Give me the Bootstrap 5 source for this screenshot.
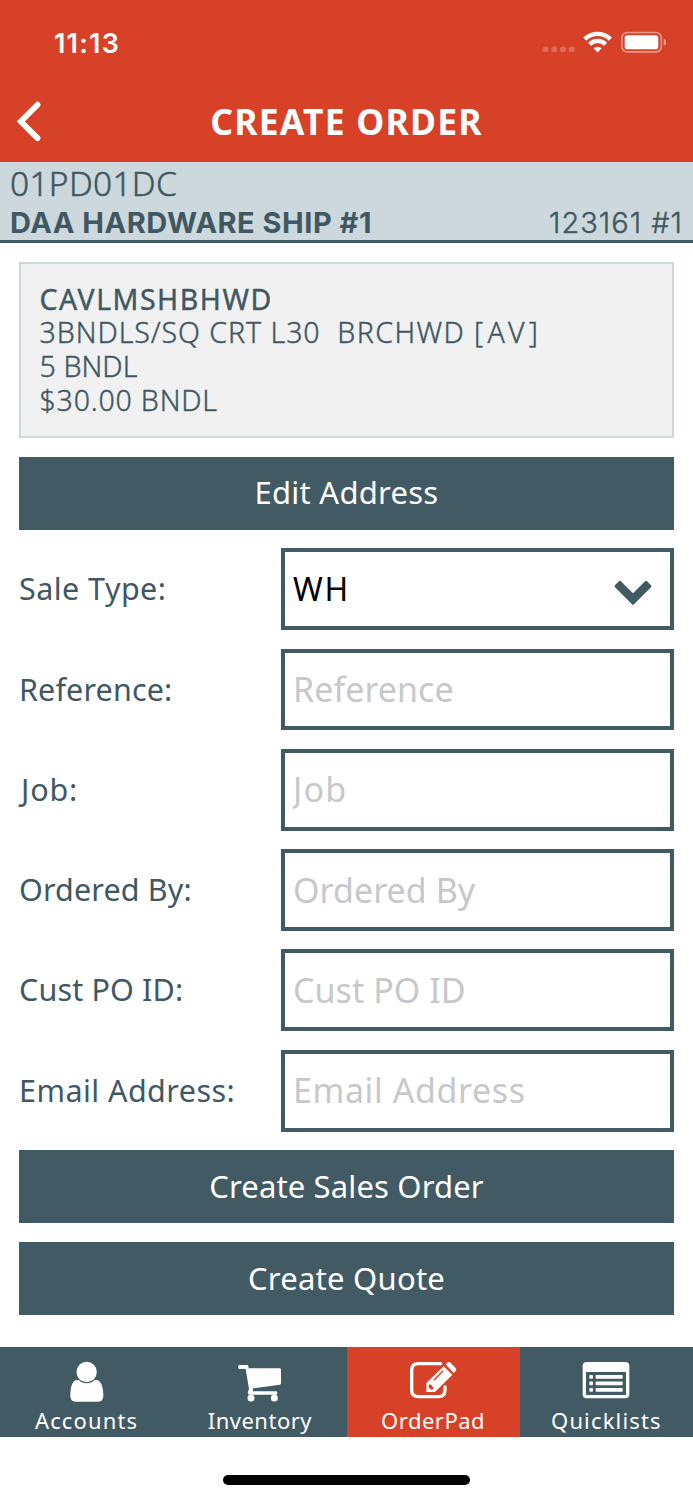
<!DOCTYPE html>
<html lang="en">
<head>
<meta charset="utf-8">
<meta name="viewport" content="width=device-width, initial-scale=1">
<title>Create Order</title>
<link rel="stylesheet" href="https://cdn.jsdelivr.net/npm/bootstrap@5.3.0/dist/css/bootstrap.min.css">
<style>
:root { --brand: #d74127; --slate: #425a64; --ink: #3f5863; --mist: #cdd8dc; }
body { font-family: "Noto Sans", sans-serif; color: var(--ink); background: #fff; }
.screen { height: 1500px; overflow: hidden; }
.brand-bg { background: var(--brand); }
.status-bar { height: 81px; padding: 3px 27px 0 54px; }
.clock { font: 600 27px/36px Inter, sans-serif; letter-spacing: 1.2px; padding-top: 3px; }
.title-bar { height: 81px; }
.title-bar h1 { font-size: 35.5px; font-weight: 700; letter-spacing: 1.19px; line-height: 80px; }
.back-link { width: 28px; height: 79px; left: 16px; }
.account-bar { background: var(--mist); border-bottom: 3px solid var(--slate); height: 81px; padding: 0 10px 0 10px; }
.account-id { font-size: 33.5px; font-weight: 300; line-height: 42px; letter-spacing: .3px; -webkit-text-stroke: .5px; }
.account-line { font: 700 29px/37px Inter, sans-serif; letter-spacing: .5px; }
.account-line .num { font-weight: 300; letter-spacing: 1px; -webkit-text-stroke: .4px; }
.content { padding: 19px 19px 0; gap: 18.5px; height: 1104px; }
.item-box { height: 176px; flex: none; background: #f1f1f1; border: 2px solid var(--mist); padding: 18.5px 18.5px; font-size: 28.5px; line-height: 33.8px; font-weight: 300; white-space: pre; -webkit-text-stroke: .4px; }
.item-code { font-weight: 400; letter-spacing: 1.5px; }
.item-desc { letter-spacing: .95px; }
.item-desc .finish { letter-spacing: 1.4px; }
.item-desc .tag { letter-spacing: 4.3px; }
.item-qty { letter-spacing: .1px; }
.item-price { letter-spacing: .8px; }
.btn-slate { height: 73.3px; flex: none; background: var(--slate); color: #fff; border: 0; border-radius: 0; font-size: 31px; line-height: 71px; padding: 0 0 1px; letter-spacing: .25px; }
.btn-slate.tight { letter-spacing: .15px; }
.field-row { height: 81.8px; flex: none; }
.field-row label { width: 262px; font-size: 30.5px; letter-spacing: .15px; line-height: 80.5px; }
.field-box { border: 4px solid var(--slate); border-radius: 0; height: 100%; padding: 0 8px 1px; font-size: 34px; letter-spacing: .05px; background: #fff; }
.field-box::placeholder { color: #c7c7cc; opacity: 1; }
.pick-box { font-size: 32px; color: #000; line-height: 71px; padding-right: 18px; letter-spacing: 1.8px; }
.field-row.airy label { letter-spacing: .45px; }
.field-row.airy input { letter-spacing: .6px; }
.field-row.wide label { letter-spacing: .8px; padding-left: 2px; }
.field-row.wide input { letter-spacing: 1.2px; }
.tabs-bar { height: 90px; background: var(--slate); }
.tab-item { padding-top: 13px; color: #fff; text-decoration: none; font-size: 22px; letter-spacing: 1.15px; line-height: 32px; }
.tab-item.tight { letter-spacing: .5px; }
.tab-item svg { width: 50px; height: 44px; display: block; }
.home-pill { width: 247.5px; height: 10px; border-radius: 5px; background: #000; margin: 38px auto 0; }
</style>
</head>
<body>
<div class="screen d-flex flex-column">
  <header class="brand-bg text-white flex-shrink-0">
    <div class="status-bar d-flex justify-content-between align-items-center">
      <span class="clock">11:13</span>
      <svg width="124" height="24" viewBox="0 0 124 24" fill="#fff" style="margin-top:2px">
        <g opacity=".22"><rect x=".8" y="15.500" width="5.6" height="5.6" rx="1.7"/><rect x="9.5" y="15.500" width="5.6" height="5.6" rx="1.7"/><rect x="18.2" y="15.500" width="5.6" height="5.6" rx="1.7"/><rect x="26.9" y="15.500" width="5.6" height="5.6" rx="1.7"/></g>
        <g fill="none" stroke="#fff" stroke-width="4.300"><path d="M42.8 8.100a18.300 18.300 0 0 1 25.600 0"/><path d="M47.6 13.200a11.400 11.400 0 0 1 16 0"/></g>
        <path d="M55.6 21.400l-4-4.100a5.800 5.800 0 0 1 8 0z"/>
        <rect x="79.900" y="1.500" width="39.400" height="19.400" rx="5.400" fill="none" stroke="#fff" stroke-opacity=".45" stroke-width="1.600"/>
        <rect x="82.700" y="4.200" width="33.600" height="14" rx="2.800"/><path opacity=".5" d="M121.700 7.700v7q2.400-1.100 2.400-3.500t-2.400-3.500z"/>
      </svg>
    </div>
    <div class="title-bar position-relative">
      <h1 class="text-center m-0">CREATE ORDER</h1>
      <a href="#" class="back-link position-absolute top-0 d-flex align-items-center" aria-label="Back">
        <svg width="28" height="42" viewBox="0 0 28 42"><path d="M21.500 4.700L4.800 21.500l16.700 16.600" fill="none" stroke="#fff" stroke-width="5.800" stroke-linecap="round"/></svg>
      </a>
    </div>
  </header>

  <section class="account-bar flex-shrink-0">
    <div class="account-id">01PD01DC</div>
    <div class="account-line d-flex justify-content-between"><span>DAA HARDWARE SHIP #1</span><span class="num">123161 #1</span></div>
  </section>

  <main class="content d-flex flex-column flex-shrink-0">
    <div class="item-box"><div class="item-code">CAVLMSHBHWD</div><div class="item-desc">3BNDLS/SQ CRT L30  <span class="finish">BRCHWD </span><span class="tag">[AV]</span></div><div class="item-qty">5 BNDL</div><div class="item-price">$30.00 BNDL</div></div>
    <button class="btn btn-slate w-100">Edit Address</button>
    <div class="field-row airy d-flex">
      <label class="flex-shrink-0">Sale Type:</label>
      <div class="field-box pick-box flex-grow-1 d-flex justify-content-between align-items-center"><span>WH</span>
        <svg width="38" height="26" viewBox="0 0 38 26" fill="#425a64" style="margin-top:9px"><path d="M1 5.200L4.900 1.300q1-1 2 0L19 13.200 31.100 1.300q1-1 2 0L37 5.200q1 1 0 2L20 24.200q-1 1-2 0L1 7.200q-1-1 0-2z"/></svg>
      </div>
    </div>
    <div class="field-row d-flex"><label for="ref" class="flex-shrink-0">Reference:</label><input id="ref" class="form-control field-box" placeholder="Reference"></div>
    <div class="field-row wide d-flex"><label for="job" class="flex-shrink-0">Job:</label><input id="job" class="form-control field-box" placeholder="Job"></div>
    <div class="field-row d-flex"><label for="by" class="flex-shrink-0">Ordered By:</label><input id="by" class="form-control field-box" placeholder="Ordered By"></div>
    <div class="field-row d-flex"><label for="po" class="flex-shrink-0">Cust PO ID:</label><input id="po" class="form-control field-box" placeholder="Cust PO ID"></div>
    <div class="field-row airy d-flex"><label for="mail" class="flex-shrink-0">Email Address:</label><input id="mail" class="form-control field-box" placeholder="Email Address"></div>
    <button class="btn btn-slate tight w-100">Create Sales Order</button>
    <button class="btn btn-slate w-100">Create Quote</button>
  </main>

  <nav class="tabs-bar row g-0 flex-shrink-0">
    <a href="#" class="tab-item col-3 d-flex flex-column align-items-center">
      <svg viewBox="185 60 150 132" fill="#fff"><path d="M229 120h60c14 3 20 22 20 48q0 17-16 17h-67q-16 0-16-17c0-26 5-45 19-48z"/><circle cx="259" cy="96" r="34" fill="#425a64"/><circle cx="259" cy="96" r="30.500"/></svg>
      <span>Accounts</span>
    </a>
    <a href="#" class="tab-item tight col-3 d-flex flex-column align-items-center">
      <svg viewBox="705 60 150 132" fill="#fff"><path d="M718 75h22q4 0 5 4l1 6h93q4 0 4 4v41q0 4-4 4l-80 11v9h70q3 0 3 5t-3 5h-81q-6-1-4-9l3-8-10-60h-19q-4-1-4-6t4-6z"/><circle cx="753" cy="174" r="10.500"/><circle cx="823" cy="174" r="10.500"/></svg>
      <span>Inventory</span>
    </a>
    <a href="#" class="tab-item tight brand-bg col-3 d-flex flex-column align-items-center">
      <svg viewBox="195 60 150 132" fill="#fff"><path d="M293 71h-67q-20 0-20 20v59q0 20 20 20h60q20 0 20-20v-9" fill="none" stroke="#fff" stroke-width="10" stroke-linecap="round"/><path fill-rule="evenodd" d="M302 79l26 25-52 52h-26v-27zM299 91l-28 28 3 3 28-28zM259 133l-3 8 8 8 7-2 1-6-5-1-1-5z"/><path d="M308 73l5-5q5-4 10 1l15 15q4 5 0 9l-6 6z"/></svg>
      <span>OrderPad</span>
    </a>
    <a href="#" class="tab-item col-3 d-flex flex-column align-items-center">
      <svg viewBox="715 60 150 132" fill="#fff"><path fill-rule="evenodd" d="M732 66h116q12 0 12 12v85q0 12-12 12H732q-12 0-12-12V78q0-12 12-12zm-2 30v69h120V96z"/><rect x="740" y="105" width="11" height="11" rx="3"/><rect x="740" y="124.500" width="11" height="11" rx="3"/><rect x="740" y="144" width="11" height="11" rx="3"/><rect x="759" y="105" width="81" height="11" rx="2"/><rect x="759" y="124.500" width="81" height="11" rx="2"/><rect x="759" y="144" width="81" height="11" rx="2"/></svg>
      <span>Quicklists</span>
    </a>
  </nav>
  <div class="home-pill flex-shrink-0"></div>
</div>
<script src="https://cdn.jsdelivr.net/npm/bootstrap@5.3.0/dist/js/bootstrap.bundle.min.js"></script>
</body>
</html>
